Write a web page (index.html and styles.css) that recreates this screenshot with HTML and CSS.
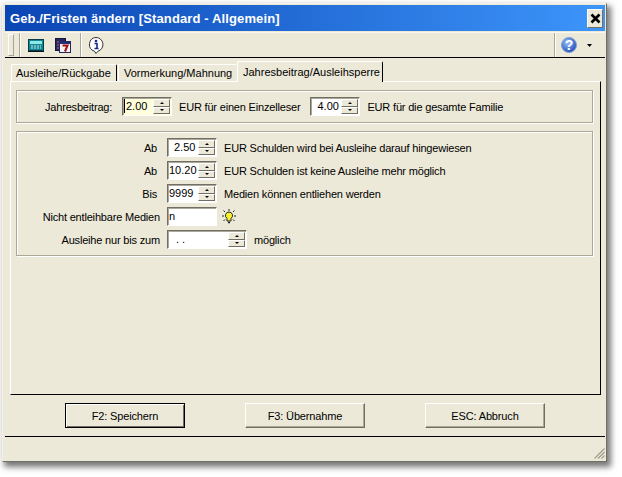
FILE: index.html
```html
<!DOCTYPE html>
<html lang="de">
<head>
<meta charset="utf-8">
<title>Geb./Fristen ändern</title>
<link rel="stylesheet" href="styles.css">
</head>
<body>
<div class="window">
  <div class="titlebar">
    <span class="title">Geb./Fristen ändern [Standard - Allgemein]</span>
    <button class="close" aria-label="Schließen"><svg width="11" height="11" viewBox="0 0 11 11"><path d="M1.5 1.500l8 8M9.500 1.500l-8 8" stroke="#000" stroke-width="2.600" fill="none"/></svg></button>
  </div>
  <div class="toolbar">
    <div class="grip"></div>
    <div class="sep first"></div>
    <div class="tools">
      <svg class="tool" width="16" height="13" viewBox="0 0 16 13"><rect x=".5" y=".5" width="15" height="11" fill="#0f8794" stroke="#0a3a48"/><rect x="2" y="2" width="12" height="3" fill="#8fe8e4"/><path d="M3 7h10M3 9h10" stroke="#cdeee8" stroke-dasharray="2 1"/><path d="M0 12.500h16" stroke="#06161c"/></svg>
      <svg class="tool" width="16" height="15" viewBox="0 0 16 15"><rect x=".5" y=".5" width="10" height="12" fill="#23265f" stroke="#14163f"/><rect x="4.500" y="3.500" width="11" height="11" fill="#f4f4f4" stroke="#23265f"/><rect x="5" y="4" width="10" height="2" fill="#2a2d78"/><path d="M7.500 7.500h5l-2.500 6" stroke="#a11010" stroke-width="2" fill="none"/><path d="M2 4h2M2 7h2M2 10h2" stroke="#d66"/></svg>
    </div>
    <div class="sep second"></div>
    <svg class="tool info" width="16" height="17" viewBox="0 0 16 17"><path d="M8 .5a7 7 0 0 1 2 13.700L8 16.500l-1.500-2.300A7 7 0 0 1 8 .5z" fill="#fff" stroke="#333"/><circle cx="8" cy="4" r="1.300" fill="#1a2a8a"/><path d="M6.500 6.500H9v4.500M6.500 11.500h4" stroke="#1a2a8a" stroke-width="1.600" fill="none"/></svg>
    <div class="spacer"></div>
    <div class="sep"></div>
    <svg class="help" width="18" height="18" viewBox="0 0 18 18"><defs><radialGradient id="h" cx="40%" cy="35%" r="70%"><stop offset="0" stop-color="#9cc4f4"/><stop offset="1" stop-color="#1c49b8"/></radialGradient></defs><circle cx="9" cy="9" r="7.500" fill="url(#h)" stroke="#7f9fd8"/><text x="9" y="13.500" text-anchor="middle" class="helpq">?</text></svg>
    <svg class="caret" width="5" height="3" viewBox="0 0 5 3"><path d="M0 0h5L2.500 3z" fill="#000"/></svg>
  </div>
  <div class="content">
    <div class="tabs">
      <div class="tab">Ausleihe/Rückgabe</div>
      <div class="tab second-tab">Vormerkung/Mahnung</div>
      <div class="tab active">Jahresbeitrag/Ausleihsperre</div>
    </div>
    <div class="page">
      <section class="group group-top">
        <span class="lbl-year">Jahresbeitrag:</span>
        <span class="spin w50 yellow"><span class="val"><i class="cursor"></i>2.00</span><span class="arrows"><b class="up"></b><b class="down"></b></span></span>
        <span class="txt">EUR für einen Einzelleser</span>
        <span class="spin w50 gap-l"><span class="val center">4.00</span><span class="arrows"><b class="up"></b><b class="down"></b></span></span>
        <span class="txt">EUR für die gesamte Familie</span>
      </section>
      <section class="group group-main">
        <div class="row"><span class="lbl">Ab</span><span class="spin w50"><span class="val center">2.50</span><span class="arrows"><b class="up"></b><b class="down"></b></span></span><span class="txt">EUR Schulden wird bei Ausleihe darauf hingewiesen</span></div>
        <div class="row"><span class="lbl">Ab</span><span class="spin w50"><span class="val">10.20</span><span class="arrows"><b class="up"></b><b class="down"></b></span></span><span class="txt">EUR Schulden ist keine Ausleihe mehr möglich</span></div>
        <div class="row"><span class="lbl">Bis</span><span class="spin w50"><span class="val">9999</span><span class="arrows"><b class="up"></b><b class="down"></b></span></span><span class="txt">Medien können entliehen werden</span></div>
        <div class="row"><span class="lbl wide">Nicht entleihbare Medien</span><span class="spin w50"><span class="val">n</span></span>
          <svg class="bulb" width="16" height="16" viewBox="0 0 16 16"><path d="M8 3a3.500 3.500 0 0 0-2 6.400V12h4V9.400A3.500 3.500 0 0 0 8 3z" fill="#f6f230" stroke="#222"/><path d="M7 13.500h2" stroke="#222" stroke-width="1.500"/><path d="M8 0v2M2.500 1.500l1.500 1.500M13.500 1.500L12 3M1 7h2M13 7h2M2.500 12l1.500-1.500M13.500 12L12 10.500" stroke="#222"/></svg></div>
        <div class="row"><span class="lbl wide">Ausleihe nur bis zum</span><span class="spin w80"><span class="val date">. .</span><span class="arrows"><b class="up"></b><b class="down"></b></span></span><span class="txt">möglich</span></div>
      </section>
    </div>
    <div class="buttons">
      <button class="btn default">F2: Speichern</button>
      <button class="btn">F3: Übernahme</button>
      <button class="btn">ESC: Abbruch</button>
    </div>
  </div>
  <div class="statusbar"><svg class="resize" width="12" height="12" viewBox="0 0 12 12"><path d="M11.500 1.500l-10 10M11.500 5l-6.500 6.500M11.500 8.500l-3 3" stroke="#a09c8c" stroke-width="1.200"/></svg></div>
</div>
</body>
</html>
```
FILE: styles.css
```css
* { box-sizing: border-box; }
html, body { margin: 0; padding: 0; background: #fff; }
body { width: 622px; height: 477px; overflow: hidden; font: 11px "Liberation Sans", Arial, sans-serif; color: #000; }
.window {
  margin: 3px 0 0 2px; width: 605px; height: 459px;
  padding: 1px 1px 2px 2px;
  background: #ece9d8;
  border: 1px solid; border-color: #f4f2e8 #716f64 #716f64 #f4f2e8;
  box-shadow: 3px 4px 6px 1px #777;
  display: flex; flex-direction: column;
}
.titlebar {
  height: 26px; flex: none; display: flex; align-items: center; justify-content: space-between;
  padding: 0 2px 0 5px;
  background: linear-gradient(90deg, #0a45b4 0%, #3d95fa 100%);
  color: #fff;
}
.title { font: bold 13px "Liberation Sans", Arial, sans-serif; letter-spacing: .12px; }
.close {
  width: 16px; height: 19px; padding: 0; margin: 0; display: flex; align-items: center; justify-content: center;
  background: #ece9d8; border: 1px solid; border-color: #fff #716f64 #716f64 #fff;
}
.toolbar {
  height: 26px; flex: none; margin-top: 1px; display: flex; align-items: center;
  border-bottom: 1px solid #000; border-top: 1px solid #f8f7f0;
}
.grip { width: 6px; height: 22px; margin-left: 3px; border: 1px solid; border-color: #fff #a7a595 #a7a595 #fff; }
.sep { width: 2px; height: 24px; border-left: 1px solid #aca899; border-right: 1px solid #fff; }
.sep.first { margin-left: 5px; }
.tools { display: flex; gap: 11px; margin-left: 7px; align-items: center; }
.sep.second { margin-left: 9px; }
.info { margin-left: 6px; }
.spacer { flex: 1; }
.help { margin-left: 4px; }
.helpq { font: bold 14px "Liberation Sans", sans-serif; fill: #fff; }
.caret { margin: 0 13px 0 9px; }
.content { flex: 1; padding: 0 4px 0 5px; min-height: 0; border-bottom: 1px solid #000; display: flex; flex-direction: column; }
.tabs { display: flex; align-items: flex-end; height: 23px; flex: none; position: relative; z-index: 1; padding-left: 1px; }
.tab {
  height: 17px; padding: 2px 3px 0 4px; white-space: nowrap; margin-right: 1px; flex: none;
  border: 1px solid; border-color: #fff #000 transparent #fff; border-bottom: 0;
  border-radius: 2px 2px 0 0;
  width: 106px;
}
.second-tab { width: 119px; padding-left: 5px; border-right-color: transparent; }
.tab.active { width: 146px; height: 21px; padding-top: 4px; padding-left: 5px; margin-left: -1px; background: #ece9d8; margin-bottom: -1px; }
.page {
  height: 314px; flex: none; padding: 8px 7px 0 5px;
  border: 1px solid; border-color: #fff #000 #000 #fff;
}
.group { border: 1px solid #aca899; box-shadow: inset 1px 1px 0 #fff, 1px 1px 0 #fff; }
.group-top { height: 33px; display: flex; align-items: center; padding-left: 28px; }
.lbl-year { width: 77px; letter-spacing: -.18px; }
.group-main { height: 125px; margin-top: 8px; padding-top: 4px; }
.row { height: 23px; display: flex; align-items: center; }
.lbl { width: 140px; text-align: right; margin-right: 10px; white-space: nowrap; letter-spacing: -.18px; }
.lbl.wide { width: 143px; margin-right: 7px; }
.spin {
  display: inline-flex; height: 19px; background: #fff; flex: none; padding: 1px;
  border: 1px solid; border-color: #716f64 #fff #fff #716f64;
  box-shadow: inset 1px 1px 0 #aca899;
}
.w50 { width: 50px; }
.w80 { width: 80px; }
.yellow { background: #ffffdc; }
.val { flex: 1; line-height: 15px; padding-left: 0; position: relative; font-size: 11px; }
.center { padding-left: 5px; }
.date { padding-left: 7px; }
.cursor { display: inline-block; width: 1px; height: 14px; background: #000; vertical-align: top; margin-right: 1px; }
.arrows { width: 17px; display: flex; flex-direction: column; flex: none; }
.arrows b {
  flex: 1; background: #ece9d8; border: 1px solid; border-color: #fff #716f64 #716f64 #fff; display: flex; align-items: center; justify-content: center;
}
.arrows b::after { content: ""; border-left: 2.500px solid transparent; border-right: 2.500px solid transparent; }
.up::after { border-bottom: 2px solid #000; }
.down::after { border-top: 2px solid #000; }
.txt { margin-left: 7px; white-space: nowrap; letter-spacing: -.18px; }
.gap-l { margin-left: 10px; }
.bulb { margin-left: 4px; }
.buttons { display: flex; padding: 8px 0 0 55px; gap: 60px; }
.btn {
  width: 120px; height: 25px; padding: 0; background: #ece9d8; font: 11px "Liberation Sans", Arial, sans-serif; letter-spacing: -.15px; color: #000;
  border: 1px solid; border-color: #fff #716f64 #716f64 #fff; box-shadow: inset -1px -1px 0 #aca899;
}
.btn.default { border-color: #000; box-shadow: inset 1px 1px 0 #fff, inset -1px -1px 0 #716f64; }
.statusbar { height: 22px; flex: none; position: relative; display: flex; justify-content: flex-end; align-items: flex-end; }
```
